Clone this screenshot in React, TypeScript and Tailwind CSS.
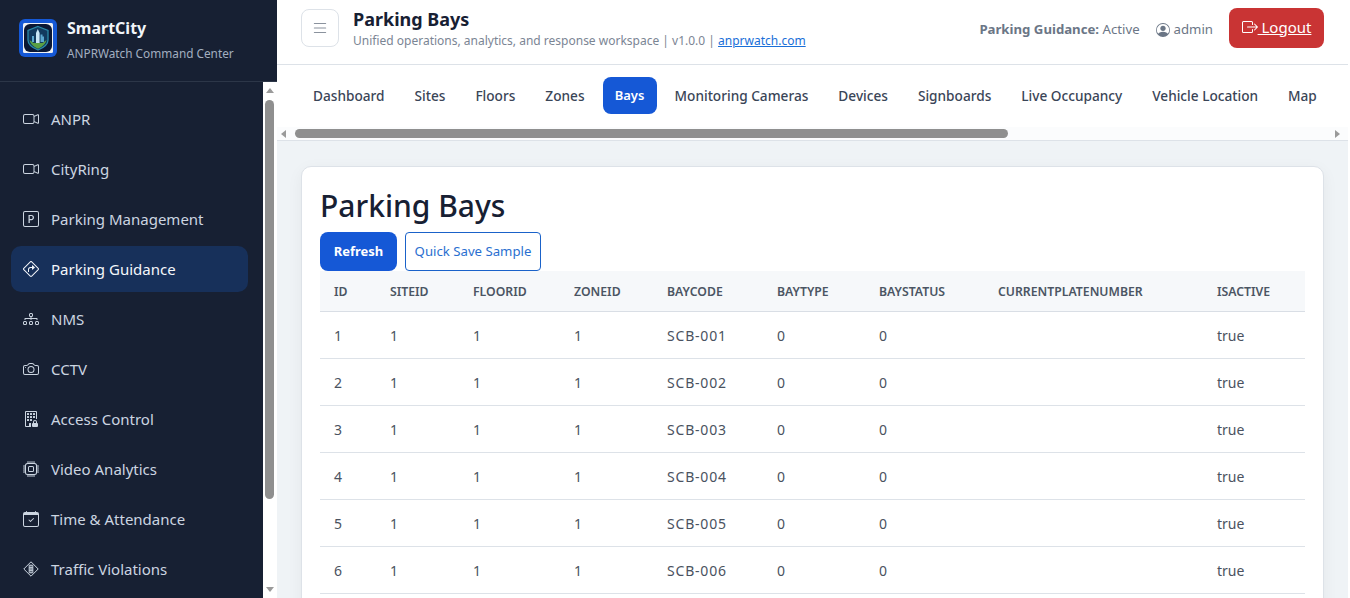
import {
  BsBoxArrowRight,
  BsBuildingLock,
  BsCalendarCheck,
  BsCamera,
  BsCameraVideo,
  BsCpu,
  BsDiagram3,
  BsList,
  BsPSquare,
  BsPersonCircle,
  BsSignTurnRight,
} from 'react-icons/bs';

// diamond sign with a striped bar, not in the icon set
const TrafficSign = ({ className }: { className?: string }) => (
  <svg viewBox="0 0 16 16" fill="none" stroke="currentColor" className={className}>
    <path d="M8 .8 15.2 8 8 15.2.8 8Z" strokeLinejoin="round" />
    <path d="M6.2 4.2h3.6v7.6H6.2Z" />
    <path d="M8 4v8M6.2 6.5h3.6M6.2 8h3.6M6.2 9.5h3.6" strokeWidth=".8" />
  </svg>
);

const navItems = [
  { label: 'ANPR', icon: BsCameraVideo },
  { label: 'CityRing', icon: BsCameraVideo },
  { label: 'Parking Management', icon: BsPSquare },
  { label: 'Parking Guidance', icon: BsSignTurnRight, active: true },
  { label: 'NMS', icon: BsDiagram3 },
  { label: 'CCTV', icon: BsCamera },
  { label: 'Access Control', icon: BsBuildingLock },
  { label: 'Video Analytics', icon: BsCpu },
  { label: 'Time & Attendance', icon: BsCalendarCheck },
  { label: 'Traffic Violations', icon: TrafficSign },
];

const tabs = ['Dashboard', 'Sites', 'Floors', 'Zones', 'Bays', 'Monitoring Cameras', 'Devices', 'Signboards', 'Live Occupancy', 'Vehicle Location', 'Map'];

const columns = [
  { name: 'ID', width: 'w-[56px]' },
  { name: 'SiteId', width: 'w-[83px]' },
  { name: 'FloorId', width: 'w-[101px]' },
  { name: 'ZoneId', width: 'w-[93px]' },
  { name: 'BayCode', width: 'w-[110px]' },
  { name: 'BayType', width: 'w-[102px]' },
  { name: 'BayStatus', width: 'w-[119px]' },
  { name: 'CurrentPlateNumber', width: 'w-[219px]' },
  { name: 'IsActive', width: 'w-[102px]' },
];

const rows = [1, 2, 3, 4, 5, 6, 7];

const Logo = () => (
  <svg width="38" height="38" viewBox="0 0 38 38" className="shrink-0">
    <rect width="38" height="38" rx="6" fill="#1558d6" />
    <rect x="4" y="4" width="30" height="30" rx="1.5" fill="#eef1f5" />
    <rect x="5" y="5" width="28" height="28" rx="6" fill="#0b1733" />
    <path d="M19 7.5 L29 11.5 V21 C29 26 24 29 19 31 C14 29 9 26 9 21 V11.5 Z" fill="#123a5e" stroke="#2a8aa8" strokeWidth="1.3" />
    <path d="M10.5 21 C12 26.5 16 28 19 29.8 C22 28 26 26.5 27.5 21 L23.5 24 H14.5 Z" fill="#5aa043" />
    <path d="M13 23 V17 H15 V23 M21.5 23 V15.5 H23.5 V17.5 H25 V23" fill="#5aa7cf" />
    <path d="M17 24 V14 L18.8 10 L20.6 14 V24 Z" fill="#c9e6f5" />
  </svg>
);

const Sidebar = () => (
  <aside className="flex h-full w-[277px] shrink-0 flex-col bg-[#172033]">
    <div className="flex h-[82px] shrink-0 items-center gap-[10px] border-b border-[#2c3648] pb-[5px] pl-[19px]">
      <Logo />
      <div className="pt-[3px]">
        <div className="text-[16px] leading-[22px] font-bold text-[#f1f5f9]">SmartCity</div>
        <div className="mt-[6px] text-[11.8px] leading-[17px] text-[#a3afc0]">ANPRWatch Command Center</div>
      </div>
    </div>
    <div className="flex min-h-0 flex-1">
      <nav className="flex w-[263px] flex-col gap-[4px] overflow-hidden pt-[14px] pr-[15px] pl-[11px]">
        {navItems.map(({ label, icon: Icon, active }) => (
          <a
            key={label}
            className={
              active
                ? 'flex h-[46px] shrink-0 items-center gap-[12px] rounded-[10px] bg-[#17305a] pl-[12px] text-[15px] text-[#f4f7fb]'
                : 'flex h-[46px] shrink-0 items-center gap-[12px] rounded-[10px] pl-[12px] text-[15px] text-[#ccd5e1]'
            }
          >
            <Icon className="h-[16px] w-[16px] shrink-0" />
            {label}
          </a>
        ))}
      </nav>
      <div className="flex w-[14px] flex-col items-center bg-white pr-[1px]">
        <div className="mt-[6px] h-0 w-0 border-x-[4px] border-b-[5px] border-x-transparent border-b-[#9a9a9a]" />
        <div className="mt-[7px] h-[399px] w-[9px] rounded-full bg-[#8f8f8f]" />
        <div className="mt-auto mb-[6px] h-0 w-0 border-x-[4px] border-t-[5px] border-x-transparent border-t-[#9a9a9a]" />
      </div>
    </div>
  </aside>
);

const Topbar = () => (
  <header className="flex h-[65px] shrink-0 items-center justify-between border-b border-[#dde2e8] bg-white px-[24px] pb-[8px]">
    <div className="flex items-center gap-[14px]">
      <button className="flex h-[38px] w-[38px] items-center justify-center rounded-[8px] border border-[#dde2e8] text-[#8a929d]">
        <BsList className="h-[18px] w-[18px]" />
      </button>
      <div>
        <div className="text-[18px] leading-[24px] font-bold text-[#172033]">Parking Bays</div>
        <div className="pt-[1px] text-[12px] leading-[17px] text-[#7b8594]">
          Unified operations, analytics, and response workspace | v1.0.0 |{' '}
          <a className="text-[#1a6fd8] underline">anprwatch.com</a>
        </div>
      </div>
    </div>
    <div className="flex items-center text-[13.2px] text-[#6b7686]">
      <div className="flex items-center pt-[4px]">
        <span>
          <b className="font-bold">Parking Guidance:</b> Active
        </span>
        <BsPersonCircle className="ml-[16px] h-[14px] w-[14px]" />
        <span className="ml-[4px]">admin</span>
      </div>
      <a className="ml-[16px] flex h-[40px] w-[95px] items-center justify-center rounded-[8px] bg-[#c93434] pb-[2px] text-[15px] text-white underline">
        <BsBoxArrowRight className="h-[16px] w-[16px]" />
        <span>&nbsp;Logout</span>
      </a>
    </div>
  </header>
);

const Tabs = () => (
  <div className="flex h-[76px] shrink-0 flex-col border-b border-[#dde2e8] bg-white">
    <div className="flex h-[62px] items-center pl-[21px]">
      {tabs.map((tab) =>
        tab === 'Bays' ? (
          <a key={tab} className="mx-[3px] mb-[2px] flex h-[37px] w-[54px] items-center justify-center rounded-[8px] bg-[#1558d6] pt-[2px] text-[13px] font-semibold text-white">
            {tab}
          </a>
        ) : (
          <a key={tab} className="flex h-[37px] items-center px-[15px] text-[13.65px] font-medium text-[#3a4557]">
            {tab}
          </a>
        ),
      )}
    </div>
    <div className="flex h-[13px] items-center bg-[#fbfcfd] px-[4px]">
      <div className="h-0 w-0 border-y-[4px] border-r-[5px] border-y-transparent border-r-[#9a9a9a]" />
      <div className="ml-[9px] h-[9px] w-[713px] rounded-full bg-[#8f8f8f]" />
      <div className="mr-[4px] ml-auto h-0 w-0 border-y-[4px] border-l-[5px] border-y-transparent border-l-[#9a9a9a]" />
    </div>
  </div>
);

const BaysTable = () => (
  <table className="w-full table-fixed border-collapse text-left">
    <thead>
      <tr className="h-[40px] border-b border-[#d9dee5] bg-[#f6f8fa]">
        {columns.map((col) => (
          <th key={col.name} className={`${col.width} pt-[2px] pl-[14px] text-[12.25px] font-semibold text-[#4b5563] uppercase`}>
            {col.name}
          </th>
        ))}
      </tr>
    </thead>
    <tbody>
      {rows.map((id) => (
        <tr key={id} className="h-[47px] border-b border-[#dde2e8] text-[14px] text-[#4a5260]">
          <td className="pt-[1px] pl-[14px]">{id}</td>
          <td className="pt-[1px] pl-[14px]">1</td>
          <td className="pt-[1px] pl-[14px]">1</td>
          <td className="pt-[1px] pl-[14px]">1</td>
          <td className="pt-[1px] pl-[14px] tracking-[0.8px]">SCB-00{id}</td>
          <td className="pt-[1px] pl-[14px]">0</td>
          <td className="pt-[1px] pl-[14px]">0</td>
          <td className="pt-[1px] pl-[14px]"></td>
          <td className="pt-[1px] pl-[14px]">true</td>
        </tr>
      ))}
    </tbody>
  </table>
);

export default function App() {
  return (
    <div className="flex h-[598px] w-[1350px] overflow-hidden bg-white pr-[2px] font-['Noto_Sans',sans-serif]">
      <Sidebar />
      <main className="flex min-w-0 flex-1 flex-col">
        <Topbar />
        <Tabs />
        <div className="flex-1 overflow-hidden bg-[#eff3f6] px-[24px] pt-[25px]">
          <section className="rounded-t-[10px] border border-[#dde2e8] bg-white px-[18px] pt-[17px] shadow-[0_4px_16px_rgba(15,23,42,0.05)]">
            <h1 className="text-[30px] leading-[43px] font-medium text-[#172033]">Parking Bays</h1>
            <div className="mt-[5px] flex gap-[8px]">
              <button className="h-[39px] w-[77px] rounded-[8px] bg-[#1558d6] pt-[1px] text-[13px] font-bold text-white">Refresh</button>
              <button className="h-[39px] w-[136px] rounded-[4px] border border-[#1a62c9] pt-[1px] text-[13.2px] text-[#2a6fd0]">Quick Save Sample</button>
            </div>
            <BaysTable />
          </section>
        </div>
      </main>
    </div>
  );
}
